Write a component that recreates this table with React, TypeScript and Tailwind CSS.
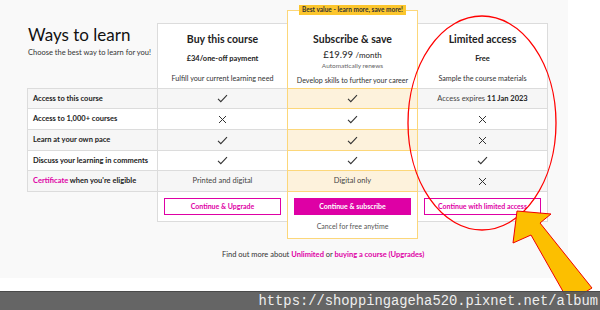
import React from 'react';

const PINK = 'text-[#de00a5]';

function Check() {
  return (
    <svg width="11" height="9" viewBox="0 0 11 9" fill="none">
      <path d="M1 4.8 L3.8 7.6 L10 1.2" stroke="#333" strokeWidth="1.1" />
    </svg>
  );
}

function Cross() {
  return (
    <svg width="9" height="9" viewBox="0 0 9 9" fill="none">
      <path d="M1 1 L8 8 M8 1 L1 8" stroke="#333" strokeWidth="1" />
    </svg>
  );
}

const rowH = ['h-[20px]', 'h-[21px]', 'h-[21px]', 'h-[20px]', 'h-[21px]'];

const labels: React.ReactNode[] = [
  'Access to this course',
  'Access to 1,000+ courses',
  'Learn at your own pace',
  'Discuss your learning in comments',
  <span>
    <span className={PINK}>Certificate</span> when you're eligible
  </span>,
];

const buy: React.ReactNode[] = [<Check />, <Cross />, <Check />, <Check />, 'Printed and digital'];
const sub: React.ReactNode[] = [<Check />, <Check />, <Check />, <Check />, 'Digital only'];
const lim: React.ReactNode[] = [
  <span>
    Access expires <b className="text-[#222]">11 Jan 2023</b>
  </span>,
  <Cross />,
  <Cross />,
  <Check />,
  <Cross />,
];

function Cells({ items, yellow }: { items: React.ReactNode[]; yellow?: boolean }) {
  return (
    <>
      {items.map((c, i) => (
        <div
          key={i}
          className={`${rowH[i]} flex items-center justify-center border-t text-[7.5px] text-[#444] ${
            yellow
              ? `border-[#fcd77a] ${i % 2 === 0 ? 'bg-[#fdf2dc]' : 'bg-white'}`
              : `border-[#dcdcdc] ${i % 2 === 0 ? 'bg-[#f6f6f6]' : 'bg-white'}`
          }`}
        >
          {c}
        </div>
      ))}
    </>
  );
}

export default function App() {
  return (
    <div className="relative w-[600px] h-[310px] bg-white overflow-hidden" style={{ fontFamily: 'Lato, "Noto Sans", sans-serif' }}>
      <div className="w-[568px] h-[278px] bg-[#f9f9f9] text-[#222]">
        <div className="flex pl-[27px] pt-[10px]">
          {/* label column */}
          <div className="w-[130px] flex flex-col">
            <div className="h-[78px] pt-[14px] pl-[1px]">
              <h1 className="text-[17px] leading-[22px] text-[#111]">Ways to learn</h1>
              <p className="text-[7.5px] mt-[1px] text-[#333]">Choose the best way to learn for you!</p>
            </div>
            <div className="border-l border-b border-[#dcdcdc]">
              {labels.map((l, i) => (
                <div
                  key={i}
                  className={`${rowH[i]} flex items-center pl-[5px] border-t border-[#dcdcdc] text-[7.5px] font-bold text-[#222] ${
                    i % 2 === 0 ? 'bg-[#f6f6f6]' : 'bg-white'
                  }`}
                >
                  {l}
                </div>
              ))}
            </div>
          </div>

          {/* buy */}
          <div className="w-[130px] flex flex-col pt-[13px]">
            <div className="border-l border-t border-[#dcdcdc] bg-white">
              <div className="h-[64px] flex flex-col items-center text-center">
                <div className="text-[10.5px] font-bold mt-[8px]">Buy this course</div>
                <div className="text-[7.5px] font-bold mt-[5px]">£34/one-off payment</div>
                <div className="text-[7.2px] mt-[10px] text-[#333]">Fulfill your current learning need</div>
              </div>
              <Cells items={buy} />
              <div className="h-[31px] border-t border-b border-[#dcdcdc] flex justify-center pt-[6px]">
                <div className={`w-[117px] h-[17px] border border-[#de00a5] bg-white flex items-center justify-center text-[7px] font-bold ${PINK}`}>
                  Continue &amp; Upgrade
                </div>
              </div>
            </div>
          </div>

          {/* subscribe */}
          <div className="w-[131px] flex flex-col">
            <div className="relative border border-[#fcd77a] bg-white">
              <div className="absolute left-[11px] top-[-6px] h-[10px] px-[3px] bg-[#fcc62d] flex items-center text-[6.5px] font-bold text-[#333] whitespace-nowrap">
                Best value - learn more, save more!
              </div>
              <div className="h-[77px] flex flex-col items-center text-center">
                <div className="text-[10.5px] font-bold mt-[21px]">Subscribe &amp; save</div>
                <div className="text-[9.5px] leading-[12px] mt-[1px]">
                  £19.99 <span className="text-[8px]">/month</span>
                </div>
                <div className="text-[6.5px] text-[#666] mt-[0px]">Automatically renews</div>
                <div className="text-[7.1px] mt-[5px] text-[#333] whitespace-nowrap">Develop skills to further your career</div>
              </div>
              <Cells items={sub} yellow />
              <div className="h-[47px] border-t border-[#fcd77a] flex flex-col items-center pt-[6px]">
                <div className="w-[117px] h-[17px] bg-[#de00a5] flex items-center justify-center text-[7px] font-bold text-white">
                  Continue &amp; subscribe
                </div>
                <div className="text-[7px] text-[#555] mt-[6px]">Cancel for free anytime</div>
              </div>
            </div>
          </div>

          {/* limited */}
          <div className="w-[130px] flex flex-col pt-[13px]">
            <div className="border-r border-t border-[#dcdcdc] bg-white">
              <div className="h-[64px] flex flex-col items-center text-center">
                <div className="text-[10.5px] font-bold mt-[8px]">Limited access</div>
                <div className="text-[7.5px] font-bold mt-[5px]">Free</div>
                <div className="text-[7.2px] mt-[10px] text-[#333]">Sample the course materials</div>
              </div>
              <Cells items={lim} />
              <div className="h-[31px] border-t border-b border-[#dcdcdc] flex justify-center pt-[6px]">
                <div className={`w-[117px] h-[17px] border border-[#de00a5] bg-white flex items-center justify-center text-[7px] font-bold ${PINK}`}>
                  Continue with limited access
                </div>
              </div>
            </div>
          </div>
        </div>

        <p className="ml-[222px] mt-[10px] text-[7.5px] text-[#333]">
          Find out more about <b className={PINK}>Unlimited</b> or <b className={PINK}>buying a course (Upgrades)</b>
        </p>
      </div>

      {/* annotation overlay */}
      <svg className="absolute left-0 top-0" width="600" height="310" viewBox="0 0 600 310">
        <ellipse cx="482" cy="123" rx="74" ry="107" fill="none" stroke="#ff0000" strokeWidth="1.3" />
        <polygon
          points="517,211 513,243 531,235 569,302 592,288 540,223 551,214"
          fill="#fcbf00"
          stroke="#f00000"
          strokeWidth="1"
          strokeLinejoin="miter"
        />
      </svg>

      <div className="absolute left-0 top-[291px] w-[600px] h-[19px] border-t border-[#4a4a4a] bg-[rgba(88,88,88,0.92)] flex items-center justify-end pr-[2px]">
        <span className="text-[13.8px] text-[#eeeeee] leading-none pt-[2px]" style={{ fontFamily: '"Liberation Mono", monospace' }}>
          https://shoppingageha520.pixnet.net/album
        </span>
      </div>
    </div>
  );
}
